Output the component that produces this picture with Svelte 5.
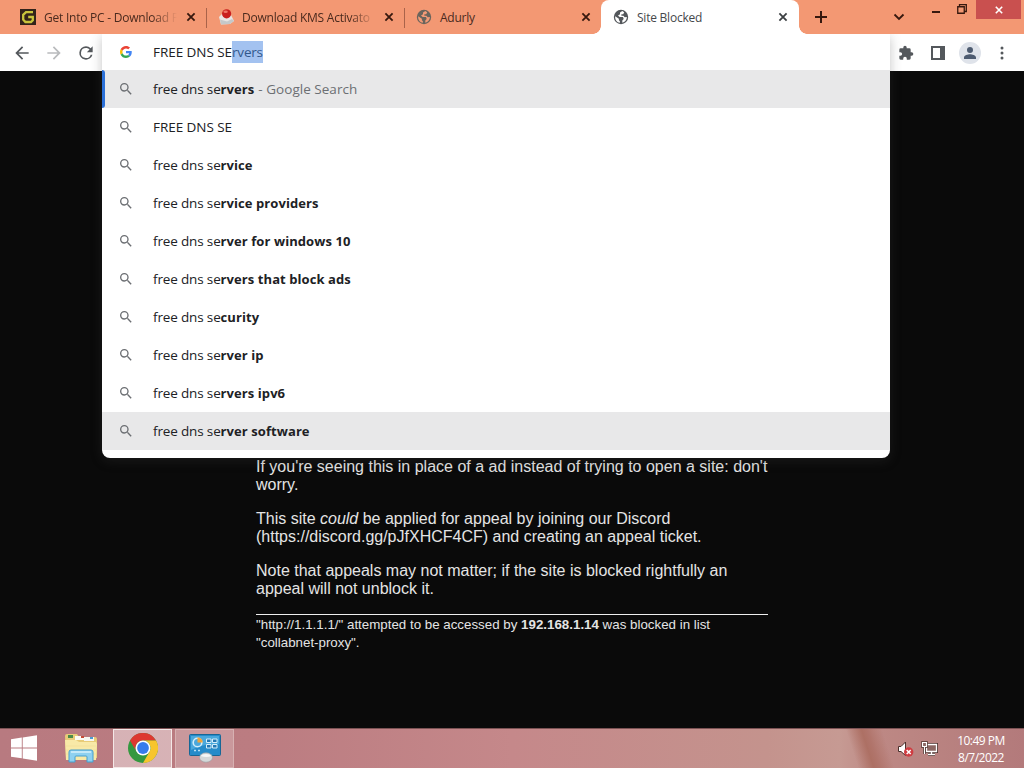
<script>
    const tabs = [
        { title: "Get Into PC - Download F", icon: "gipc" },
        { title: "Download KMS Activato", icon: "kms" },
        { title: "Adurly", icon: "globe" },
        { title: "Site Blocked", icon: "globe", active: true },
    ]

    const suggestions = [
        { typed: "free dns se", rest: "rvers", note: "Google Search", selected: true },
        { typed: "FREE DNS SE", rest: "", plain: true },
        { typed: "free dns se", rest: "rvice" },
        { typed: "free dns se", rest: "rvice providers" },
        { typed: "free dns se", rest: "rver for windows 10" },
        { typed: "free dns se", rest: "rvers that block ads" },
        { typed: "free dns se", rest: "curity" },
        { typed: "free dns se", rest: "rver ip" },
        { typed: "free dns se", rest: "rvers ipv6" },
        { typed: "free dns se", rest: "rver software", hover: true },
    ]
</script>

<div class="desktop">
    <header class="tabstrip">
        {#each tabs as tab, i}
            <div class="tab" class:active={tab.active} class:line={i < 2}>
                {#if tab.icon == "gipc"}
                    <svg class="fav" viewBox="0 0 16 16">
                        <rect width="16" height="16" fill="#33231a" />
                        <path d="M13 3.2H6L3.2 5.8v4.8L5.4 13H11l1.8-1.8V8H8.2" fill="none" stroke="#c9c43c" stroke-width="2.3" />
                    </svg>
                {:else if tab.icon == "kms"}
                    <svg class="fav" viewBox="0 0 16 16">
                        <path d="M1 8l3-3 9 1 3 6-4 3-9 .5z" fill="#e9e4e2" />
                        <path d="M3 15.5l9-.5 4-3-2-2-5 2.5-7-2z" fill="#c5c8c9" />
                        <circle cx="8.6" cy="4.8" r="4.6" fill="#c91f1e" />
                        <ellipse cx="7.6" cy="2.7" rx="2.2" ry="1.2" fill="#ef7768" />
                    </svg>
                {:else}
                    <svg class="fav" viewBox="0 0 16 16">
                        <circle cx="8" cy="8" r="7.2" fill={tab.active ? "#53575b" : "#6a645c"} />
                        <path d="M9.3 2.1L7 3.5v1.7L5 6.600 6.600 8h3.400l.7 2-1.400 1.400v2.400c2.600-.5 4.600-2.800 4.600-5.700l-2.200.2-1.300-1.500H8.400V5.300h1.800L11.200 3.200zM2.200 7.200l3.700 2.600v1.400l1 1v1.600C4 13.400 1.800 10.600 2.200 7.200z" fill={tab.active ? "#fff" : "#f39a76"} />
                    </svg>
                {/if}
                <span class="title" class:cut={i < 2}>{tab.title}</span>
                <svg class="x" viewBox="0 0 10 10"><path d="M1.400 1.400l7.200 7.200M8.600 1.400L1.400 8.600" /></svg>
            </div>
        {/each}
        <svg class="plus" viewBox="0 0 14 14"><path d="M7 1v12M1 7h12" /></svg>
        <svg class="chevron" viewBox="0 0 12 12"><path d="M1.500 3.500L6 8l4.500-4.500" /></svg>
        <div class="winbtns">
            <svg class="min" viewBox="0 0 8 2"><path d="M0 0h8v2H0z" fill="#36180e" /></svg>
            <svg class="restore" viewBox="0 0 10 10"><path d="M.75 2.750h6.500v6.500h-6.500zM2.500 2.500V.7h6.800v6.800H7.500" fill="none" stroke="#36180e" stroke-width="1.300" /></svg>
            <div class="close">
                <svg viewBox="0 0 8 8"><path d="M.8.8l6.400 6.400M7.200.8L.8 7.200" stroke="#fff" stroke-width="1.600" /></svg>
            </div>
        </div>
    </header>

    <nav class="toolbar">
        <svg class="tool" viewBox="0 0 24 24"><path d="M20 11H7.830l5.590-5.590L12 4l-8 8 8 8 1.410-1.410L7.830 13H20z" /></svg>
        <svg class="tool dim" viewBox="0 0 24 24"><path d="M12 4l-1.410 1.410L16.170 11H4v2h12.170l-5.580 5.590L12 20l8-8z" /></svg>
        <svg class="tool" viewBox="0 0 24 24"><path d="M17.650 6.350A7.960 7.960 0 0 0 12 4a8 8 0 1 0 7.730 10h-2.080A6 6 0 1 1 12 6c1.660 0 3.140.69 4.220 1.780L13 11h7V4z" /></svg>
        <div class="right">
            <svg class="puzzle" viewBox="0 0 24 24"><path d="M20.500 11H19V7a2 2 0 0 0-2-2h-4V3.500a2.500 2.500 0 0 0-5 0V5H4a2 2 0 0 0-2 2v3.800h1.500a2.700 2.700 0 0 1 0 5.400H2V20a2 2 0 0 0 2 2h3.800v-1.500a2.700 2.700 0 0 1 5.400 0V22H17a2 2 0 0 0 2-2v-4h1.500a2.500 2.500 0 0 0 0-5z" /></svg>
            <svg class="panel" viewBox="0 0 14 14"><path d="M0 0h14v14H0zM2 2v10h7V2z" fill-rule="evenodd" /></svg>
            <div class="avatar">
                <svg viewBox="0 0 24 24"><path d="M12 12a4.500 4.500 0 1 0 0-9 4.500 4.500 0 0 0 0 9zm0 2c-3.300 0-9 1.500-9 4.800V21h18v-2.200c0-3.300-5.700-4.800-9-4.800z" /></svg>
            </div>
            <svg class="dots" viewBox="0 0 4 14"><circle cx="2" cy="2" r="1.500" /><circle cx="2" cy="7" r="1.500" /><circle cx="2" cy="12" r="1.500" /></svg>
        </div>
    </nav>

    <div class="omnibox">
        <div class="input">
            <svg class="google" viewBox="0 0 48 48">
                <path fill="#ea4335" d="M24 9.500c3.540 0 6.710 1.220 9.210 3.600l6.850-6.850C35.900 2.380 30.470 0 24 0 14.620 0 6.510 5.380 2.560 13.220l7.980 6.190C12.430 13.720 17.740 9.500 24 9.500z" />
                <path fill="#4285f4" d="M46.980 24.550c0-1.570-.15-3.090-.38-4.550H24v9.020h12.940c-.58 2.960-2.260 5.480-4.780 7.180l7.730 6c4.510-4.180 7.090-10.360 7.090-17.650z" />
                <path fill="#fbbc05" d="M10.530 28.590A14.500 14.500 0 0 1 9.770 24c0-1.600.27-3.140.76-4.590l-7.980-6.190A23.900 23.900 0 0 0 0 24c0 3.880.92 7.540 2.560 10.780z" />
                <path fill="#34a853" d="M24 48c6.480 0 11.930-2.130 15.890-5.810l-7.730-6c-2.150 1.450-4.920 2.300-8.160 2.300-6.260 0-11.570-4.220-13.470-9.910l-7.980 6.190C6.510 42.620 14.620 48 24 48z" />
            </svg>
            <span class="query">FREE DNS SE<mark>rvers</mark></span>
        </div>
        {#each suggestions as s}
            <div class="row" class:selected={s.selected} class:hover={s.hover}>
                <svg class="lens" viewBox="0 0 24 24"><path d="M15.500 14h-.79l-.28-.27A6.470 6.470 0 0 0 16 9.500 6.500 6.500 0 1 0 9.500 16c1.610 0 3.090-.59 4.230-1.570l.27.28v.79l5 4.990L20.490 19zm-6 0a4.500 4.500 0 1 1 0-9 4.500 4.500 0 0 1 0 9z" /></svg>
                <span class:caps={s.plain}>{s.typed}<b>{s.rest}</b></span>
                {#if s.note}<span class="note">- {s.note}</span>{/if}
            </div>
        {/each}
    </div>

    <main>
        <div class="blocked">
            <p>If you're seeing this in place of a ad instead of trying to open a site: don't worry.</p>
            <p>This site <i>could</i> be applied for appeal by joining our Discord (https://discord.gg/pJfXHCF4CF) and creating an appeal ticket.</p>
            <p>Note that appeals may not matter; if the site is blocked rightfully an appeal will not unblock it.</p>
            <hr>
            <small>"http://1.1.1.1/" attempted to be accessed by <b>192.168.1.14</b> was blocked in list <br>"collabnet-proxy".</small>
        </div>
    </main>

    <footer class="taskbar">
        <div class="start">
            <svg viewBox="0 0 28 26"><path d="M1 4.200l10.800-1.600v9.900H1zM12.700 2.400L27 .3v12.200H12.700zM1 13.400h10.800v9.900L1 21.700zM12.700 13.400H27v12.300l-14.300-2.200z" fill="#fff" /></svg>
        </div>
        <div class="app">
            <svg width="34" height="30" viewBox="0 0 34 30">
                <path d="M1 3q0-2 2-2h10l2 3h16q2 0 2 2v19H2z" fill="#e8cc78" />
                <path d="M4 2h5v3H4z" fill="#4b8b4a" /><path d="M11 3h9v4h-9z" fill="#fbfbf4" /><path d="M20 4h10v4H20z" fill="#f7f7f1" />
                <path d="M17 3h3v2h-3z" fill="#c64b37" /><path d="M26 4h3v2h-3z" fill="#4d9cd2" />
                <path d="M1 7h11l3 2h17l1 2-1 16H2z" fill="#f8e9a7" />
                <path d="M2 13h30M2 17h30M2 21h30" stroke="#f3e19c" stroke-width="1" />
                <path d="M5 29V19q0-2 2-2h20q2 0 2 2v10h-6v-5q0-1-1-1H12q-1 0-1 1v5z" fill="#8ed1f0" stroke="#459fce" />
                <path d="M7 19h20" stroke="#d6f1fb" stroke-width="1.500" />
            </svg>
        </div>
        <div class="app open current">
            <svg width="30" height="30" viewBox="0 0 30 30">
                <circle cx="15" cy="15" r="15" fill="#34983f" />
                <path d="M2 7.500A15 15 0 0 1 28 7.500H15a7.500 7.500 0 0 0-6.500 11.250z" fill="#dd3830" />
                <path d="M28 7.500A15 15 0 0 1 15 30l6.500-11.250A7.500 7.500 0 0 0 15 7.500z" fill="#f7c52d" />
                <circle cx="15" cy="15" r="7.500" fill="#fff" />
                <circle cx="15" cy="15" r="5.900" fill="#377cec" />
            </svg>
        </div>
        <div class="app open">
            <svg width="32" height="30" viewBox="0 0 32 30">
                <rect x=".5" y="1.500" width="31" height="21" rx="1" fill="#268bc9" stroke="#176796" />
                <path d="M2 3h28v8Q15 10 2 17z" fill="#4aa8dc" />
                <circle cx="8.500" cy="9.500" r="4.300" fill="none" stroke="#d4eefb" stroke-width="1.600" />
                <path d="M8.500 9.500V4.200a5.300 5.300 0 0 1 5.300 5.300z" fill="#f2a43b" />
                <path d="M17.500 6h4.500v3.500h-4.500zM23.500 6H28v3.500h-4.500zM17.500 11.500h4.500V15h-4.500zM23.500 11.500H28V15h-4.500z" fill="#2578b4" stroke="#d4eefb" />
                <path d="M5 17.500h2M9 17.500h2" stroke="#b8e1f5" stroke-width="1.500" />
                <ellipse cx="17" cy="24.500" rx="6.500" ry="4.700" fill="#d4d8d9" stroke="#98a0a5" stroke-width=".6" />
                <path d="M11.500 23a6 3.500 0 0 1 11 0q-5 2-11 0z" fill="#f5f6f6" />
            </svg>
        </div>
        <div class="tray">
            <svg width="17" height="18" viewBox="0 0 17 18">
                <path d="M1.500 6.500H4L8.500 2v13.500L4 11.500H1.500z" fill="#fff" stroke="#4b302c" />
                <circle cx="11.700" cy="12" r="4.700" fill="#cf3c41" />
                <path d="M9.700 10l4 4M13.700 10l-4 4" stroke="#fff" stroke-width="1.500" />
            </svg>
            <svg width="17" height="16" viewBox="0 0 17 16">
                <path d="M5.500 3.500h10v7h-10zM10.500 10.500v3M7 13.500h7" fill="none" stroke="#4b302c" stroke-width="3" />
                <path d="M5.500 3.500h10v7h-10zM10.500 10.500v3M7 13.500h7" fill="#8c6763" stroke="#fff" stroke-width="1.300" />
                <path d="M1.500 1.500h4v4h-4zM3.500 6v7" fill="#8c6763" stroke="#4b302c" stroke-width="2.600" />
                <path d="M1.500 1.500h4v4h-4zM3.500 6v7" fill="#8c6763" stroke="#fff" stroke-width="1.200" />
            </svg>
        </div>
        <div class="clock">
            <div>10:49 PM</div>
            <div>8/7/2022</div>
        </div>
    </footer>
</div>

<style>
    :global(body){
        overflow: hidden;
    }
    .desktop{
        position: relative;
        width: 1024px;
        height: 768px;
        display: flex;
        flex-direction: column;
        background: #0a0a0a;
        font-family: "Open Sans", "Noto Sans", sans-serif;
    }
    svg{
        display: block;
        flex: none;
    }

    /* tabs */
    .tabstrip{
        height: 34px;
        display: flex;
        align-items: center;
        padding-left: 8px;
        background: #f39873;
    }
    .tab{
        position: relative;
        box-sizing: border-box;
        width: 198px;
        height: 34px;
        padding: 0 10px 0 12px;
        display: flex;
        align-items: center;
        font-size: 12px;
        letter-spacing: -0.23px;
        color: #4a2a1e;
    }
    .tab.line::after{
        content: "";
        position: absolute;
        right: -1px;
        top: 8px;
        width: 1px;
        height: 20px;
        background: #a9634a;
    }
    .tab.active{
        background: #fff;
        border-radius: 8px 8px 0 0;
        color: #45484b;
        left: -1px;
    }
    .tab.active::before, .tab.active::after{
        content: "";
        position: absolute;
        bottom: 0;
        width: 8px;
        height: 8px;
    }
    .tab.active::before{
        left: -8px;
        background: radial-gradient(circle at 0 0, transparent 7.5px, #fff 8px);
    }
    .tab.active::after{
        right: -8px;
        background: radial-gradient(circle at 100% 0, transparent 7.5px, #fff 8px);
    }
    .fav{
        width: 16px;
        height: 16px;
        margin-right: 8px;
    }
    .title{
        flex: 1;
        min-width: 0;
        white-space: nowrap;
        margin-right: 11px;
    }
    .title.cut{
        margin-right: 8px;
        mask-image: linear-gradient(to right, #000 108px, transparent 133px);
    }
    .x{
        width: 10px;
        height: 10px;
    }
    .tab:not(.line) .x{
        margin-right: 1px;
    }
    .x path{
        stroke: #36180e;
        stroke-width: 1.8;
    }
    .active .x path{
        stroke: #3c4043;
    }
    .plus{
        width: 14px;
        height: 14px;
        margin-left: 14px;
    }
    .plus path{
        stroke: #36180e;
        stroke-width: 2;
    }
    .chevron{
        width: 12px;
        height: 12px;
        margin-left: 65px;
    }
    .chevron path{
        fill: none;
        stroke: #36180e;
        stroke-width: 1.8;
    }
    .winbtns{
        display: flex;
        align-self: flex-start;
        align-items: flex-start;
        margin-left: 27px;
    }
    .min{
        width: 8px;
        height: 2px;
        margin-top: 11px;
    }
    .restore{
        width: 10px;
        height: 10px;
        margin: 4px 9px 0 17px;
    }
    .close{
        width: 45px;
        height: 19px;
        display: flex;
        align-items: center;
        justify-content: center;
        background: #c9504f;
    }
    .close svg{
        width: 8px;
        height: 8px;
    }

    /* toolbar */
    .toolbar{
        height: 37px;
        box-sizing: border-box;
        display: flex;
        align-items: center;
        padding: 0 20px 0 12px;
        gap: 12px;
        background: #fff;
    }
    .tool{
        width: 20px;
        height: 20px;
        fill: #54585c;
    }
    .dim{
        fill: #b9bbbd;
    }
    .right{
        margin-left: auto;
        display: flex;
        align-items: center;
        fill: #54585c;
    }
    .puzzle{
        width: 16px;
        height: 16px;
        margin-right: 17px;
    }
    .panel{
        width: 14px;
        height: 14px;
        margin-right: 14px;
    }
    .avatar{
        width: 22px;
        height: 22px;
        border-radius: 50%;
        background: #dfe3ea;
        display: flex;
        align-items: center;
        justify-content: center;
        margin-right: 19px;
    }
    .avatar svg{
        width: 16px;
        height: 16px;
        fill: #4d5b70;
    }
    .dots{
        width: 4px;
        height: 14px;
    }

    /* address bar with its dropdown, floats over the page */
    .omnibox{
        position: absolute;
        left: 102px;
        top: 34px;
        width: 788px;
        height: 424px;
        background: #fff;
        border-radius: 0 0 8px 8px;
        box-shadow: 0 3px 12px rgba(60, 60, 60, 0.3);
        font-size: 13.5px;
        color: #202124;
        clip-path: inset(0 -20px -20px -20px);
    }
    .input{
        height: 36px;
        display: flex;
        align-items: center;
        padding-left: 18px;
    }
    .google{
        width: 12px;
        height: 12px;
        margin-right: 21px;
    }
    .query{
        letter-spacing: -0.05px;
    }
    mark{
        display: inline-block;
        line-height: 22px;
        letter-spacing: -0.2px;
        background: #a3c2f0;
        color: #32588d;
    }
    .row{
        height: 38px;
        display: flex;
        align-items: center;
        padding-left: 16px;
        white-space: pre;
        letter-spacing: -0.15px;
    }
    .row b{
        font-size: 13px;
        letter-spacing: 0.08px;
    }
    .row .caps{
        letter-spacing: -0.05px;
    }
    .selected, .hover{
        background: #e8e8e9;
    }
    .selected{
        position: relative;
    }
    .selected::before{
        content: "";
        position: absolute;
        left: 0;
        top: 0;
        width: 3px;
        height: 38px;
        background: #2b70d8;
        border-radius: 0 3px 3px 0;
    }
    .lens{
        width: 16px;
        height: 16px;
        margin-right: 19px;
        fill: #6b6e72;
    }
    .note{
        margin-left: 4px;
        letter-spacing: 0.03px;
        color: #6c6f73;
    }

    /* blocked page */
    main{
        flex: 1;
        display: flex;
        flex-direction: column;
        align-items: center;
        padding-top: 387px;
        font-family: "Liberation Sans", Arial, sans-serif;
        font-size: 16px;
        line-height: 18px;
        color: #e4e4e4;
    }
    .blocked{
        width: 512px;
    }
    p{
        margin: 0 0 16px;
    }
    hr{
        height: 1px;
        border: none;
        background: #eee;
        margin: 0;
    }
    small{
        display: block;
        font-size: 13.333px;
        margin-top: 1px;
    }

    /* taskbar */
    .taskbar{
        height: 40px;
        display: flex;
        align-items: center;
        background: linear-gradient(72deg, transparent 82.800%, #ad7064 84.300%, #b1756c 84.900%, transparent 86.300%),
            linear-gradient(to right, #b87a80 0%, #bb7c81 25%, #c5888a 50%, #c4938d 75%, #c69a93 82%, #bd8884 86%, #b37a7b 100%);
        border-top: 1px solid #7d5355;
        box-sizing: border-box;
    }
    .start{
        width: 51px;
        padding-left: 10px;
        box-sizing: border-box;
    }
    .start svg{
        width: 28px;
        height: 26px;
        margin-bottom: 2px;
    }
    .app{
        box-sizing: border-box;
        width: 59px;
        height: 39px;
        display: flex;
        align-items: center;
        justify-content: center;
        margin-right: 3px;
    }
    .app svg{
        margin-bottom: 1px;
    }
    .open{
        border: 1px solid #d7b1b2;
        background: rgba(255, 255, 255, 0.22);
    }
    .current{
        border-color: #f4e8e7;
        background: rgba(255, 255, 255, 0.42);
    }
    .tray{
        margin-left: auto;
        display: flex;
        align-items: center;
        gap: 7px;
    }
    .clock{
        width: 86px;
        text-align: center;
        font-size: 12px;
        line-height: 17px;
        letter-spacing: -0.5px;
        color: #fff;
    }
</style>
